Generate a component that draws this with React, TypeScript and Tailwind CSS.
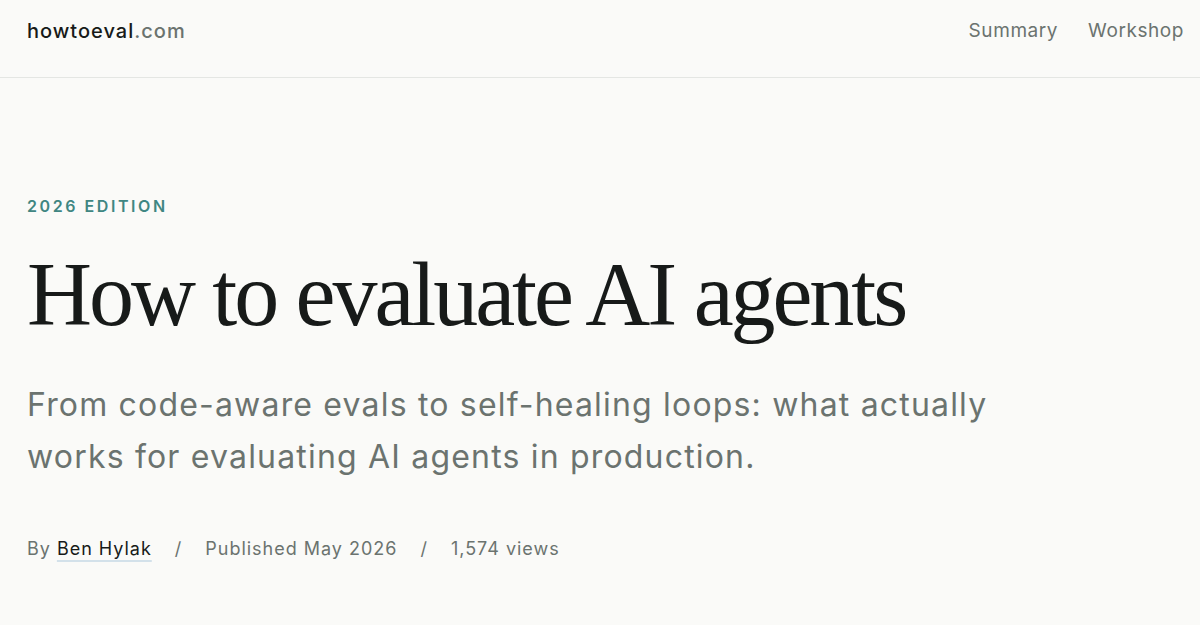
export default function App() {
  return (
    <div className="min-h-screen bg-[#fafaf8] font-['Inter','Noto_Sans',sans-serif] text-[#1a1d1c]">
      {/* Top bar */}
      <header className="flex h-[78px] items-center justify-between border-b border-[#e4e6e3] pl-[27px] pr-[16px] pb-[15px]">
        <a className="text-[20px] font-medium tracking-[0.05em] text-[#171a19]">
          howtoeval<span className="text-[#6b736f]">.com</span>
        </a>
        <nav className="flex items-center gap-[30px] text-[19px] tracking-[0.03em] text-[#6b736f]">
          <a>Summary</a>
          <a>Workshop</a>
        </nav>
      </header>

      {/* Hero */}
      <main className="px-[27px] pt-[116px]">
        <p className="text-[16px] leading-[24px] font-semibold uppercase tracking-[0.16em] text-[#3f8682]">
          2026 Edition
        </p>
        <h1 className="mt-[32px] font-['Liberation_Serif','Times_New_Roman',serif] text-[90px] leading-none tracking-[-0.034em] text-[#171a19]">
          How to evaluate AI agents
        </h1>
        <p className="mt-[39px] max-w-[1000px] text-[32px] leading-[52px] tracking-[0.037em] text-[#6b736f]">
          From code-aware evals to self-healing loops: what actually works for evaluating AI
          agents in production.
        </p>
        <div className="mt-[52px] flex items-center text-[18px] leading-[28px] tracking-[0.055em] text-[#6b736f]">
          <span>By</span>
          <a className="ml-[6px] text-[#171a19] underline decoration-[#d3e1ea] decoration-2 underline-offset-[5px]">
            Ben Hylak
          </a>
          <span className="mx-[23px]">/</span>
          <span>Published May 2026</span>
          <span className="mx-[23px]">/</span>
          <span>1,574 views</span>
        </div>
      </main>
    </div>
  );
}
